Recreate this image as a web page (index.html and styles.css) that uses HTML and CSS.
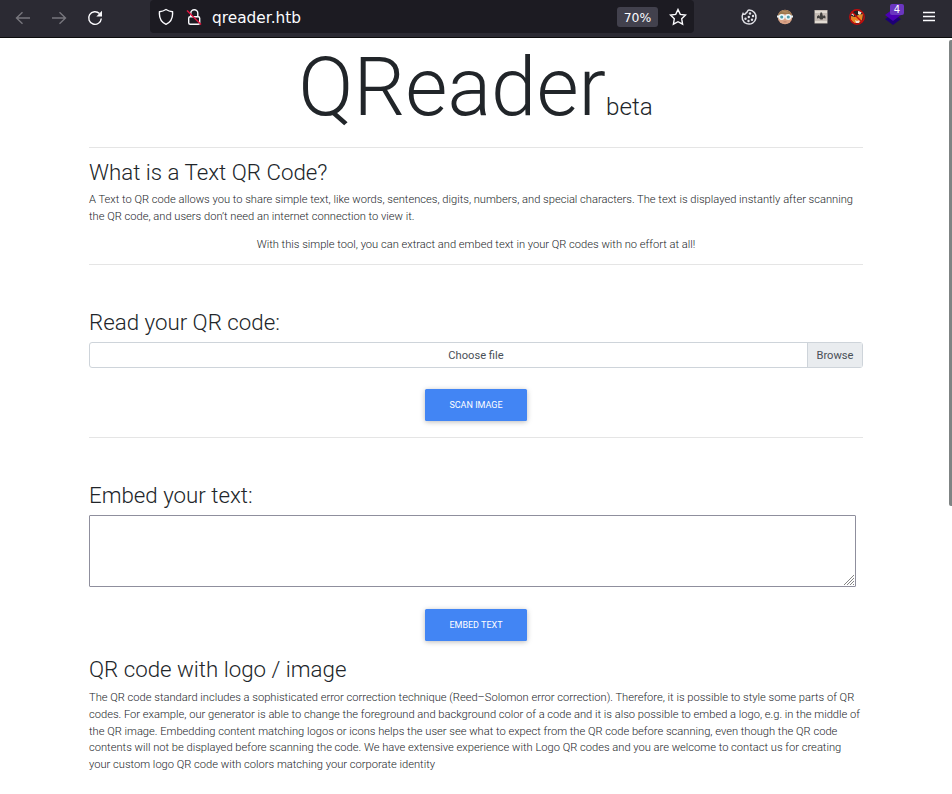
FILE: index.html
```html
<!DOCTYPE html>
<html lang="en">
<head>
<meta charset="utf-8">
<title>QReader</title>
<link rel="stylesheet" href="styles.css">
</head>
<body>
<header class="toolbar">
  <nav class="nav">
    <svg class="dim" width="16" height="16" viewBox="0 0 16 16"><path d="M15 8H1.500M7.500 2.300 1.500 8l6 5.700"/></svg>
    <svg class="dim" width="16" height="16" viewBox="0 0 16 16"><path d="M1 8h13.500M8.500 2.300l6 5.700-6 5.700"/></svg>
    <svg width="16" height="16" viewBox="0 0 16 16"><path d="M12.500 3.600A6.300 6.300 0 1 0 14.300 8.500"/><path d="M15 .8V6.500H9.300z" fill="#fbfbfe" stroke="none"/></svg>
  </nav>
  <div class="address">
    <svg class="shield" width="16" height="18" viewBox="0 0 16 18"><path d="M8 1.500c2 1.300 4 2 6.500 2.200.6 5.800-1.600 10.300-6.500 12.600C3.100 14 .9 9.500 1.500 3.700 4 3.500 6 2.800 8 1.500z"/></svg>
    <svg class="lock" width="16" height="18" viewBox="0 0 16 18"><rect x="2.700" y="8.700" width="11" height="7.600" rx="1.500"/><path d="M4.800 8.500V5.200a3.500 3.500 0 0 1 7 0v3.300"/><path class="slash" d="M1 2.500l14 14"/></svg>
    <span class="url">qreader.htb</span>
    <span class="zoom">70%</span>
    <svg class="star" width="18" height="18" viewBox="0 0 18 18"><path d="M9 1.500l2.300 4.900 5.200.7-3.800 3.700.9 5.400L9 13.700l-4.600 2.500.9-5.400-3.800-3.700 5.200-.7z"/></svg>
  </div>
  <div class="extensions">
    <svg width="18" height="18" viewBox="0 0 18 18"><path class="cookie" d="M3 5.500A7 7 0 1 0 9 2C7 2 8 4.500 6 5c-.6 1.500-2.400 1.600-3 .5z"/><g fill="#e2e2e8" stroke="none"><circle cx="10" cy="5.500" r="1.200"/><circle cx="13" cy="8" r="1.200"/><circle cx="8.800" cy="9" r="1.200"/><circle cx="5.500" cy="10.700" r="1.200"/><circle cx="12" cy="11.700" r="1.200"/><circle cx="8.500" cy="13" r="1.200"/></g></svg>
    <svg width="18" height="18" viewBox="0 0 18 18" class="flat"><circle cx="9" cy="9" r="7.300" fill="#daa487"/><path d="M1.800 9C2-.2 16-.2 16.200 9L12.500 6H5.500z" fill="#9b7850"/><path d="M5 4c3-2 6-1 8 1" fill="#b48b60"/><path d="M1 7.500h16v2H1z" fill="#e6eff2"/><circle cx="5.700" cy="9" r="2.300" fill="#519bab" stroke="#edf7fa" stroke-width="1.500"/><circle cx="12.300" cy="9" r="2.300" fill="#519bab" stroke="#edf7fa" stroke-width="1.500"/><path d="M7.500 13.500h3v.8h-3z" fill="#b27663"/></svg>
    <svg width="18" height="18" viewBox="0 0 18 18" class="flat"><rect x="2.500" y="2" width="13" height="13.500" fill="#c5bbb4"/><path d="M3 3h12v2H3zM3 13h12v2H3z" fill="#e2dbd3"/><path d="M5 10.500V8.500L6.500 7l1 1.500L8.500 4.500h1.500l1 4 1-1.500 1.500 1.500v2l-2-.5-1 1.500H8.500L7 10z" fill="#403e3d"/></svg>
    <svg width="18" height="18" viewBox="0 0 18 18" class="flat"><path d="M4 3l5-.5 5 1.500v4l-5 2-5-2z" fill="#222"/><path d="M3 8l4 1 3-2 5-1-1 6-3 3H6l-3-3z" fill="#e98724"/><path d="M10 3l4 1-2 3-2-1zM3 6l3-1v3zM7 12l2 1 3-1-1 3H8z" fill="#f2e6d8"/><circle cx="9" cy="9" r="7.200" fill="none" stroke="#c60b0b" stroke-width="1.400"/><path d="M4 4l10 10" stroke="#c60b0b" stroke-width="1.400"/></svg>
    <span class="layers">
      <svg width="18" height="18" viewBox="0 0 18 18" class="flat"><path d="M1 11l8-5 8 5-8 6z" fill="#1d0076"/><path d="M1 7l8-6 8 6-8 6z" fill="#4c00b4"/></svg>
      <b class="badge">4</b>
    </span>
    <svg class="menu" width="14" height="16" viewBox="0 0 14 16"><path d="M1 4.500h12M1 8.500h12M1 12.500h12"/></svg>
  </div>
</header>
<div class="scrollbar"></div>
<main class="container">
  <h1>QReader<small>beta</small></h1>
  <hr>
  <h3>What is a Text QR Code?</h3>
  <p class="intro">A Text to QR code allows you to share simple text, like words, sentences, digits, numbers, and special characters. The text is displayed instantly after scanning<br>the QR code, and users don’t need an internet connection to view it.</p>
  <p class="center">With this simple tool, you can extract and embed text in your QR codes with no effort at all!</p>
  <hr class="after-intro">
  <section class="tool">
    <h3>Read your QR code:</h3>
    <label class="file"><span class="file-name">Choose file</span><span class="browse">Browse</span></label>
    <button class="btn" type="button">Scan image</button>
  </section>
  <hr>
  <section class="tool">
    <h3>Embed your text:</h3>
    <div class="text-field"><svg class="grip" width="12" height="12" viewBox="0 0 12 12"><path d="M1 11 11 1M4 11l7-7M7 11l4-4M10 11l1-1"/></svg></div>
    <button class="btn" type="button">Embed text</button>
  </section>
  <section class="about">
    <h3>QR code with logo / image</h3>
    <p>The QR code standard includes a sophisticated error correction technique (Reed–Solomon error correction). Therefore, it is possible to style some parts of QR<br>codes. For example, our generator is able to change the foreground and background color of a code and it is also possible to embed a logo, e.g. in the middle of<br>the QR image. Embedding content matching logos or icons helps the user see what to expect from the QR code before scanning, even though the QR code<br>contents will not be displayed before scanning the code. We have extensive experience with Logo QR codes and you are welcome to contact us for creating<br>your custom logo QR code with colors matching your corporate identity</p>
  </section>
</main>
</body>
</html>
```
FILE: styles.css
```css
* { box-sizing: border-box; }
body {
  margin: 0;
  height: 794px;
  overflow: hidden;
  background: #fff;
  color: #212529;
  font: 300 11.155px/16.8px Roboto, "Liberation Sans", sans-serif;
}

/* Browser toolbar */
.toolbar {
  display: flex;
  align-items: flex-start;
  height: 38px;
  background: #2b2a33;
  border-bottom: 1px solid #0c0c0d;
}
.toolbar svg { display: block; flex: none; fill: none; stroke: #fbfbfe; stroke-width: 1.4; }
.toolbar svg.flat { stroke: none; }
.toolbar svg.dim { stroke: #77767d; }
.nav { display: flex; gap: 20px; width: 150px; padding: 10px 0 0 15px; }
.address {
  display: flex;
  align-items: center;
  width: 544px;
  height: 33px;
  padding: 1px 7px 0 8px;
  background: #1c1b22;
  border-radius: 4px;
  color: #fbfbfe;
  font: 400 15.35px/20px "DejaVu Sans", sans-serif;
}
.lock { margin-left: 12px; }
.toolbar .slash { stroke: #e2143f; }
.url { flex: 1; margin-left: 10px; padding-top: 1px; }
.zoom {
  width: 41px;
  height: 20px;
  margin-right: 11px;
  background: #42414d;
  border-radius: 3px;
  font-size: 12.4px;
  line-height: 21px;
  text-align: center;
}
.extensions { display: flex; gap: 18px; padding: 8px 0 0 46px; }
.toolbar .cookie { stroke: #e2e2e8; stroke-width: 1.5; }
.menu { margin-left: 2px; }
.layers { position: relative; }
.badge {
  position: absolute;
  top: -4px;
  left: 6px;
  width: 14px;
  height: 11px;
  background: #6a36bf;
  border-radius: 2px;
  color: #fff;
  font: 400 10px/11px "DejaVu Sans", sans-serif;
  text-align: center;
}
.scrollbar {
  position: absolute;
  top: 40px;
  right: 0;
  width: 3px;
  height: 466px;
  background: #7f8484;
  border-radius: 2px 0 0 2px;
}

/* Page */
.container { width: 774px; margin-left: 89px; }
h1 {
  height: 109px;
  margin: 0;
  padding-right: 1px;
  font-size: 81.5px;
  font-weight: 300;
  line-height: 98px;
  text-align: center;
  white-space: nowrap;
}
h1 small { font-size: 24.2px; line-height: 1; }
hr { height: 1px; margin: 0 0 11px; border: 0; background: #e5e5e5; }
h3 { margin: 0 0 6px; font-size: 22.3px; font-weight: 300; line-height: 27px; }
p { margin: 0 0 11.2px; white-space: nowrap; }
.intro { margin-bottom: 10.8px; padding-top: .4px; }
.center { text-align: center; }
.after-intro { margin-top: -1px; }
.tool { padding-top: 33px; }
.file {
  display: flex;
  height: 26px;
  margin-bottom: 21px;
  border: 1px solid #ced4da;
  border-radius: 3px;
  color: #495057;
  font-weight: 400;
  line-height: 25px;
  text-align: center;
}
.file-name { flex: 1; padding-left: 55px; }
.browse { width: 55px; height: 24px; border-left: 1px solid #ced4da; background: #e9ecef; }
.btn {
  display: block;
  width: 102px;
  height: 32px;
  margin: 0 auto 16px;
  padding: 0;
  border: 0;
  border-radius: 1.5px;
  background: #4285f4;
  box-shadow: 0 1px 4px rgba(0, 0, 0, .16), 0 1px 7px rgba(0, 0, 0, .12);
  color: #fff;
  font: 400 9px/32px Roboto, sans-serif;
  text-transform: uppercase;
}
.text-field {
  display: flex;
  align-items: flex-end;
  justify-content: flex-end;
  width: 767px;
  height: 72px;
  margin-bottom: 22px;
  border: 1px solid #8f8f9d;
  border-radius: 1px;
}
.grip { fill: none; stroke: #777; stroke-width: .9; }
.about { margin-top: -1px; }
.about p { padding-top: 1.2px; }
```
